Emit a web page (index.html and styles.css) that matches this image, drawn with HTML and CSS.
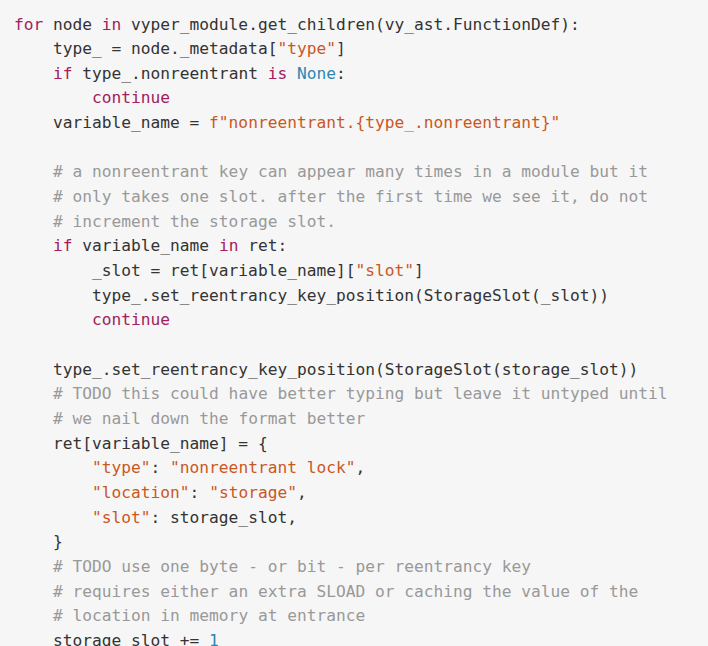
FILE: index.html
```html
<!DOCTYPE html>
<html>
<head>
<meta charset="utf-8">
<link rel="stylesheet" href="styles.css">
</head>
<body>
<pre class="code"><code><span class="kw">for</span> node <span class="kw">in</span> vyper_module.get_children(vy_ast.FunctionDef):
    type_ = node._metadata[<span class="str">"type"</span><span class="br">]</span>
    <span class="kw">if</span> type_.nonreentrant <span class="kw">is</span> <span class="lit">None</span>:
        <span class="kw">continue</span>
    variable_name = <span class="str">f"nonreentrant.{type_.nonreentrant}"</span>

    <span class="cm"># a nonreentrant key can appear many times in a module but it</span>
    <span class="cm"># only takes one slot. after the first time we see it, do not</span>
    <span class="cm"># increment the storage slot.</span>
    <span class="kw">if</span> variable_name <span class="kw">in</span> ret:
        _slot = ret[variable_name][<span class="str">"slot"</span><span class="br">]</span>
        type_.set_reentrancy_key_position(StorageSlot(_slot))
        <span class="kw">continue</span>

    type_.set_reentrancy_key_position(StorageSlot(storage_slot))
    <span class="cm"># TODO this could have better typing but leave it untyped until</span>
    <span class="cm"># we nail down the format better</span>
    ret[variable_name] = {
        <span class="str">"type"</span>: <span class="str">"nonreentrant lock"</span>,
        <span class="str">"location"</span>: <span class="str">"storage"</span>,
        <span class="str">"slot"</span>: storage_slot,
    }
    <span class="cm"># TODO use one byte - or bit - per reentrancy key</span>
    <span class="cm"># requires either an extra SLOAD or caching the value of the</span>
    <span class="cm"># location in memory at entrance</span>
    storage_slot += <span class="num">1</span>
</code></pre>
</body>
</html>
```

FILE: styles.css
```css
html, body {
  margin: 0;
  padding: 0;
  background: #f6f6f6;
  height: 100%;
  overflow: hidden;
}

.code {
  margin: 0;
  padding: 12.5px 14px 0 14px;
  background: #f6f6f6;
  color: #333333;
  font-family: "DejaVu Sans Mono", "Liberation Mono", monospace;
  font-size: 16.22px;
  line-height: 24.65px;
  white-space: pre;
}

.code code {
  font-family: inherit;
}

.kw {
  color: #a0215e;
}

.str {
  color: #c9581f;
}

.lit {
  color: #2d86b3;
}

.num {
  color: #2d86b3;
}

.cm {
  color: #999999;
}

.br {
  color: #2c3454;
}
```
